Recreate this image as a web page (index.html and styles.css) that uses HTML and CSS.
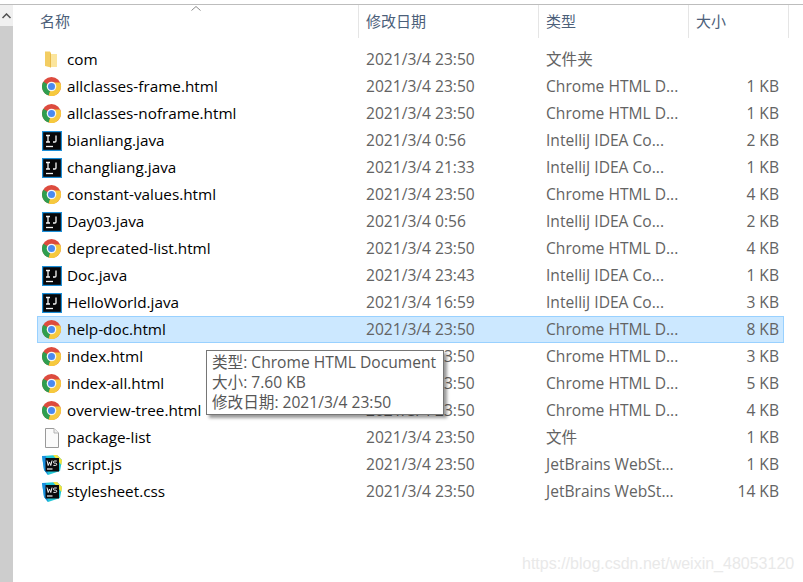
FILE: index.html
```html
<!DOCTYPE html>
<html lang="zh">
<head>
<meta charset="utf-8">
<title>文件列表</title>
<link rel="stylesheet" href="styles.css">
</head>
<body>
<svg class="defs" width="0" height="0" aria-hidden="true">
  <symbol id="i-chrome" viewBox="0 1 20 20">
    <circle cx="9.500" cy="9.500" r="9.500" fill="#dd4b3e" transform="translate(0 1)"/>
    <path d="M9.500 10.500 L1.300 5.700 A9.500 9.500 0 0 0 6.700 19.600 Z" fill="#2f9e4f"/>
    <path d="M9.500 10.500 L6.700 19.600 A9.500 9.500 0 0 0 18.100 6.500 L9.500 6.500 Z" fill="#f6c93e"/>
    <circle cx="9.500" cy="10.500" r="4.800" fill="#f4f6f8"/>
    <circle cx="9.500" cy="10.500" r="3.500" fill="#4a8af0"/>
  </symbol>
  <symbol id="i-ij" viewBox="0 0 20 20">
    <rect x="0" y="0" width="20" height="20" fill="#1d8fd8"/>
    <rect x="1.200" y="1.200" width="17.600" height="17.600" fill="#060608"/>
    <path d="M4 4.500h4M6 4.500v6.500M4 11h4M14 4.500v5.500q0 1-1.200 1h-1.800" fill="none" stroke="#f4f4f4" stroke-width="1.300"/>
    <path d="M4 15.500h7" stroke="#f4f4f4" stroke-width="1.300"/>
  </symbol>
  <symbol id="i-ws" viewBox="0 0 20 20">
    <path d="M0 1 L15 0 L20 5 L18 16 L6 20 L2 15 Z" fill="#21c7d6"/>
    <path d="M11 0 L15 0 L20 5 L19.500 10 Z" fill="#f3e23e"/>
    <path d="M0 1 L4 1 L6 20 L2 15 Z" fill="#1b8fe0"/>
    <rect x="3.500" y="3" width="13.500" height="13.500" fill="#0a0a0c"/>
    <path d="M5 5.500 L6.200 10.500 L7.500 7 L8.800 10.500 L10 5.500" fill="none" stroke="#f2f2f2" stroke-width="1"/>
    <path d="M14.800 6h-2.300q-1 0-1 1.100t1 1.100h1.200q1 0 1 1.100t-1 1.100h-2.300" fill="none" stroke="#f2f2f2" stroke-width="1"/>
    <path d="M5 14h5.500" stroke="#f2f2f2" stroke-width="1.200"/>
  </symbol>
  <symbol id="i-folder" viewBox="0 0 20 20">
    <path d="M3 1.500 H8 L9 3 V17.500 L3 16 Z" fill="#f3cd62"/>
    <path d="M9 4 H15 V17 H9 Z" fill="#fbe59d"/>
    <path d="M8 3 L9 4 V17.500 L8 17 Z" fill="#e8b949"/>
  </symbol>
  <symbol id="i-file" viewBox="0 0 20 20">
    <path d="M3.500 .5 H12 L16.500 5 V19.500 H3.500 Z" fill="#fbfbfb" stroke="#9a9a9a"/>
    <path d="M12 .5 V5 H16.500" fill="#efefef" stroke="#b5b5b5"/>
  </symbol>
</svg>

<div class="window">
  <aside class="scrollbar">
    <div class="scroll-up">
      <svg class="scroll-arrow" viewBox="0 0 9 6"><path d="M.5 5 L4.500 1 L8.500 5" fill="none" stroke="#505050" stroke-width="1.500"/></svg>
    </div>
  </aside>
  <main class="pane">
    <div class="header">
      <div class="hcell hname">名称
        <svg class="sort" viewBox="0 0 10 5"><path d="M.5 4.500 L5 .5 L9.500 4.500" fill="none" stroke="#8a8a8a"/></svg>
      </div>
      <div class="hcell">修改日期</div>
      <div class="hcell">类型</div>
      <div class="hcell">大小</div>
    </div>
    <div class="list">
      <div class="row"><div class="name"><svg class="icon"><use href="#i-folder"/></svg><span class="label">com</span></div><div class="cell">2021/3/4 23:50</div><div class="cell">文件夹</div><div class="cell size"></div></div>
      <div class="row"><div class="name"><svg class="icon"><use href="#i-chrome"/></svg><span class="label">allclasses-frame.html</span></div><div class="cell">2021/3/4 23:50</div><div class="cell">Chrome HTML D...</div><div class="cell size">1 KB</div></div>
      <div class="row"><div class="name"><svg class="icon"><use href="#i-chrome"/></svg><span class="label">allclasses-noframe.html</span></div><div class="cell">2021/3/4 23:50</div><div class="cell">Chrome HTML D...</div><div class="cell size">1 KB</div></div>
      <div class="row"><div class="name"><svg class="icon"><use href="#i-ij"/></svg><span class="label">bianliang.java</span></div><div class="cell">2021/3/4 0:56</div><div class="cell">IntelliJ IDEA Co...</div><div class="cell size">2 KB</div></div>
      <div class="row"><div class="name"><svg class="icon"><use href="#i-ij"/></svg><span class="label">changliang.java</span></div><div class="cell">2021/3/4 21:33</div><div class="cell">IntelliJ IDEA Co...</div><div class="cell size">1 KB</div></div>
      <div class="row"><div class="name"><svg class="icon"><use href="#i-chrome"/></svg><span class="label">constant-values.html</span></div><div class="cell">2021/3/4 23:50</div><div class="cell">Chrome HTML D...</div><div class="cell size">4 KB</div></div>
      <div class="row"><div class="name"><svg class="icon"><use href="#i-ij"/></svg><span class="label">Day03.java</span></div><div class="cell">2021/3/4 0:56</div><div class="cell">IntelliJ IDEA Co...</div><div class="cell size">2 KB</div></div>
      <div class="row"><div class="name"><svg class="icon"><use href="#i-chrome"/></svg><span class="label">deprecated-list.html</span></div><div class="cell">2021/3/4 23:50</div><div class="cell">Chrome HTML D...</div><div class="cell size">4 KB</div></div>
      <div class="row"><div class="name"><svg class="icon"><use href="#i-ij"/></svg><span class="label">Doc.java</span></div><div class="cell">2021/3/4 23:43</div><div class="cell">IntelliJ IDEA Co...</div><div class="cell size">1 KB</div></div>
      <div class="row"><div class="name"><svg class="icon"><use href="#i-ij"/></svg><span class="label">HelloWorld.java</span></div><div class="cell">2021/3/4 16:59</div><div class="cell">IntelliJ IDEA Co...</div><div class="cell size">3 KB</div></div>
      <div class="row selected"><div class="name"><svg class="icon"><use href="#i-chrome"/></svg><span class="label">help-doc.html</span></div><div class="cell">2021/3/4 23:50</div><div class="cell">Chrome HTML D...</div><div class="cell size">8 KB</div></div>
      <div class="row"><div class="name"><svg class="icon"><use href="#i-chrome"/></svg><span class="label">index.html</span></div><div class="cell">2021/3/4 23:50</div><div class="cell">Chrome HTML D...</div><div class="cell size">3 KB</div></div>
      <div class="row"><div class="name"><svg class="icon"><use href="#i-chrome"/></svg><span class="label">index-all.html</span></div><div class="cell">2021/3/4 23:50</div><div class="cell">Chrome HTML D...</div><div class="cell size">5 KB</div></div>
      <div class="row"><div class="name"><svg class="icon"><use href="#i-chrome"/></svg><span class="label">overview-tree.html</span></div><div class="cell">2021/3/4 23:50</div><div class="cell">Chrome HTML D...</div><div class="cell size">4 KB</div></div>
      <div class="row"><div class="name"><svg class="icon"><use href="#i-file"/></svg><span class="label">package-list</span></div><div class="cell">2021/3/4 23:50</div><div class="cell">文件</div><div class="cell size">1 KB</div></div>
      <div class="row"><div class="name"><svg class="icon"><use href="#i-ws"/></svg><span class="label">script.js</span></div><div class="cell">2021/3/4 23:50</div><div class="cell">JetBrains WebSt...</div><div class="cell size">1 KB</div></div>
      <div class="row"><div class="name"><svg class="icon"><use href="#i-ws"/></svg><span class="label">stylesheet.css</span></div><div class="cell">2021/3/4 23:50</div><div class="cell">JetBrains WebSt...</div><div class="cell size">14 KB</div></div>
    </div>
  </main>
</div>

<div class="tooltip">
  <div>类型: Chrome HTML Document</div>
  <div>大小: 7.60 KB</div>
  <div>修改日期: 2021/3/4 23:50</div>
</div>
<div class="watermark">https://blog.csdn.net/weixin_48053120</div>
</body>
</html>
```
FILE: styles.css
```css
html, body {
  margin: 0;
  padding: 0;
  height: 100%;
  overflow: hidden;
  background: #fff;
}
body {
  font-family: "Open Sans", "Noto Sans", "Noto Sans CJK SC", sans-serif;
  font-size: 15.6px;
  color: #000;
}
.defs { position: absolute; }
.window {
  display: flex;
  height: 578px;
  margin-top: 4px;
  border-top: 1px solid #bdbdbd;
}
.scrollbar {
  width: 13px;
  background: #cdcdcd;
  flex: none;
}
.scroll-up {
  height: 21px;
  background: #f0f0f0;
  display: flex;
  align-items: center;
  justify-content: center;
}
.scroll-arrow { width: 9px; height: 6px; }
.pane {
  flex: 1;
  padding-left: 24px;
  min-width: 0;
}
.header, .row {
  display: grid;
  grid-template-columns: 322px 180px 150px 100px;
}
.header {
  height: 31px;
  margin-bottom: 10px;
}
.hcell {
  position: relative;
  padding-left: 7px;
  border-right: 1px solid #e5e5e5;
  color: #4c607a;
  font-size: 15px;
  line-height: 33px;
  box-sizing: border-box;
}
.hname { padding-left: 3px; }
.sort {
  position: absolute;
  left: 154px;
  top: 1px;
  width: 10px;
  height: 5px;
}
.row {
  height: 27px;
  line-height: 26px;
  width: 747px;
  box-sizing: border-box;
}
.name {
  display: flex;
  align-items: center;
  gap: 5px;
  padding-left: 5px;
  font-size: 15.3px;
  white-space: nowrap;
}
.label { margin-bottom: 2px; }
.icon { width: 20px; height: 20px; flex: none; }
.cell {
  padding-left: 7px;
  color: #636363;
  white-space: nowrap;
}
.size {
  text-align: right;
  padding-right: 10px;
}
.selected {
  background: #cce8ff;
  box-shadow: inset 0 0 0 1px #99d1ff;
}
.tooltip {
  position: absolute;
  left: 206px;
  top: 350px;
  width: 238px;
  height: 65px;
  box-sizing: border-box;
  padding: 1px 5px;
  background: #fff;
  border: 1px solid #767676;
  box-shadow: 3px 3px 3px rgba(0, 0, 0, .4);
  color: #575757;
  line-height: 20px;
  white-space: nowrap;
}
.watermark {
  position: absolute;
  left: 522px;
  top: 554px;
  font-family: "Liberation Sans", sans-serif;
  font-size: 16px;
  line-height: 20px;
  color: #e9e9e9;
}
```
